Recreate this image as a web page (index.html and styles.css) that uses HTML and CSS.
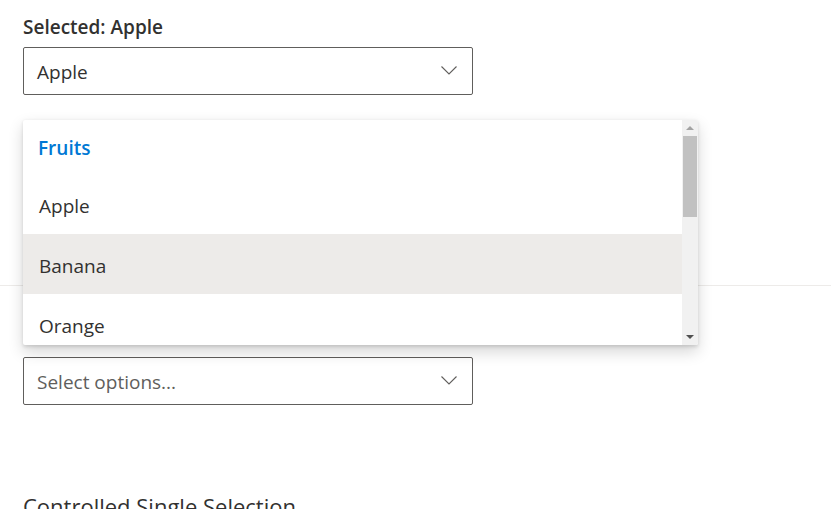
FILE: index.html
```html
<!DOCTYPE html>
<html lang="en">
<head>
<meta charset="utf-8">
<title>Dropdown</title>
<link rel="stylesheet" href="styles.css">
</head>
<body>
<main class="page">
  <section class="demo demo-first">
    <div class="field-label">Selected: Apple</div>
    <div class="dropdown-wrap">
      <div class="select">
        <span class="select-text">Apple</span>
        <svg class="chevron" width="16" height="9" viewBox="0 0 16 9"><path d="M0.5 0.5 L8 8 L15.5 0.5" fill="none" stroke="#605e5c" stroke-width="1.1"/></svg>
      </div>
      <div class="callout">
        <div class="list">
          <div class="group-header">Fruits</div>
          <div class="option">Apple</div>
          <div class="option option-hover">Banana</div>
          <div class="option">Orange</div>
        </div>
        <div class="scrollbar">
          <div class="sb-btn"><span class="tri tri-up"></span></div>
          <div class="sb-track"><div class="sb-thumb"></div></div>
          <div class="sb-btn"><span class="tri tri-down"></span></div>
        </div>
      </div>
    </div>
  </section>
  <section class="demo demo-second">
    <div class="select">
      <span class="select-text placeholder">Select options...</span>
      <svg class="chevron" width="16" height="9" viewBox="0 0 16 9"><path d="M0.5 0.5 L8 8 L15.5 0.5" fill="none" stroke="#605e5c" stroke-width="1.1"/></svg>
    </div>
  </section>
  <h2 class="section-title">Controlled Single Selection</h2>
</main>
</body>
</html>
```
FILE: styles.css
```css
html, body {
  margin: 0;
  padding: 0;
  background: #ffffff;
  overflow: hidden;
}
body {
  font-family: "Open Sans", "Noto Sans", "Liberation Sans", sans-serif;
  color: #323130;
  width: 831px;
  height: 509px;
}
.page {
  display: flex;
  flex-direction: column;
}
.demo {
  padding: 0 0 0 23px;
  border-bottom: 1px solid #edebe9;
}
.demo-first {
  padding-top: 13px;
  padding-bottom: 190px;
}
.demo-second {
  border-bottom: none;
  padding-top: 71px;
}
.field-label {
  font-size: 19px;
  font-weight: 600;
  line-height: 28px;
  height: 28px;
  margin-bottom: 6px;
  color: #323130;
}
.dropdown-wrap {
  position: relative;
  width: 450px;
}
.select {
  box-sizing: border-box;
  width: 450px;
  height: 48px;
  border: 1px solid #605e5c;
  border-radius: 2px;
  display: flex;
  align-items: center;
  justify-content: space-between;
  padding: 1px 15px 0 13px;
  background: #fff;
}
.select-text {
  font-size: 19px;
  color: #323130;
  line-height: 28px;
}
.placeholder {
  color: #605e5c;
}
.chevron {
  display: block;
  margin-bottom: 2px;
}
.callout {
  position: absolute;
  left: 0;
  top: 73px;
  width: 675px;
  height: 225px;
  background: #fff;
  border-radius: 2px;
  box-shadow: 0 6.4px 14.4px rgba(0,0,0,0.16), 0 1.2px 3.6px rgba(0,0,0,0.12);
  display: flex;
  overflow: hidden;
  z-index: 10;
}
.list {
  flex: 1;
  overflow: hidden;
}
.group-header {
  height: 54px;
  box-sizing: border-box;
  padding: 1px 15px 0;
  display: flex;
  align-items: center;
  font-size: 19px;
  font-weight: 600;
  color: #0078d4;
}
.option {
  height: 60px;
  box-sizing: border-box;
  padding: 3px 16px 0;
  display: flex;
  align-items: center;
  font-size: 19px;
  color: #323130;
}
.option-hover {
  background: #edebe9;
}
.scrollbar {
  width: 16px;
  flex: none;
  background: #f1f1f1;
  display: flex;
  flex-direction: column;
}
.sb-btn {
  height: 16px;
  display: flex;
  align-items: center;
  justify-content: center;
}
.sb-track {
  flex: 1;
  padding: 0 1px;
}
.sb-thumb {
  height: 81px;
  background: #c1c1c1;
}
.tri {
  width: 0;
  height: 0;
  border-left: 4px solid transparent;
  border-right: 4px solid transparent;
}
.tri-up {
  border-bottom: 4px solid #a3a3a3;
}
.tri-down {
  border-top: 4px solid #505050;
}
.section-title {
  margin: 86px 0 0 23px;
  font-size: 22px;
  font-weight: 500;
  line-height: 30px;
  color: #323130;
}
```
